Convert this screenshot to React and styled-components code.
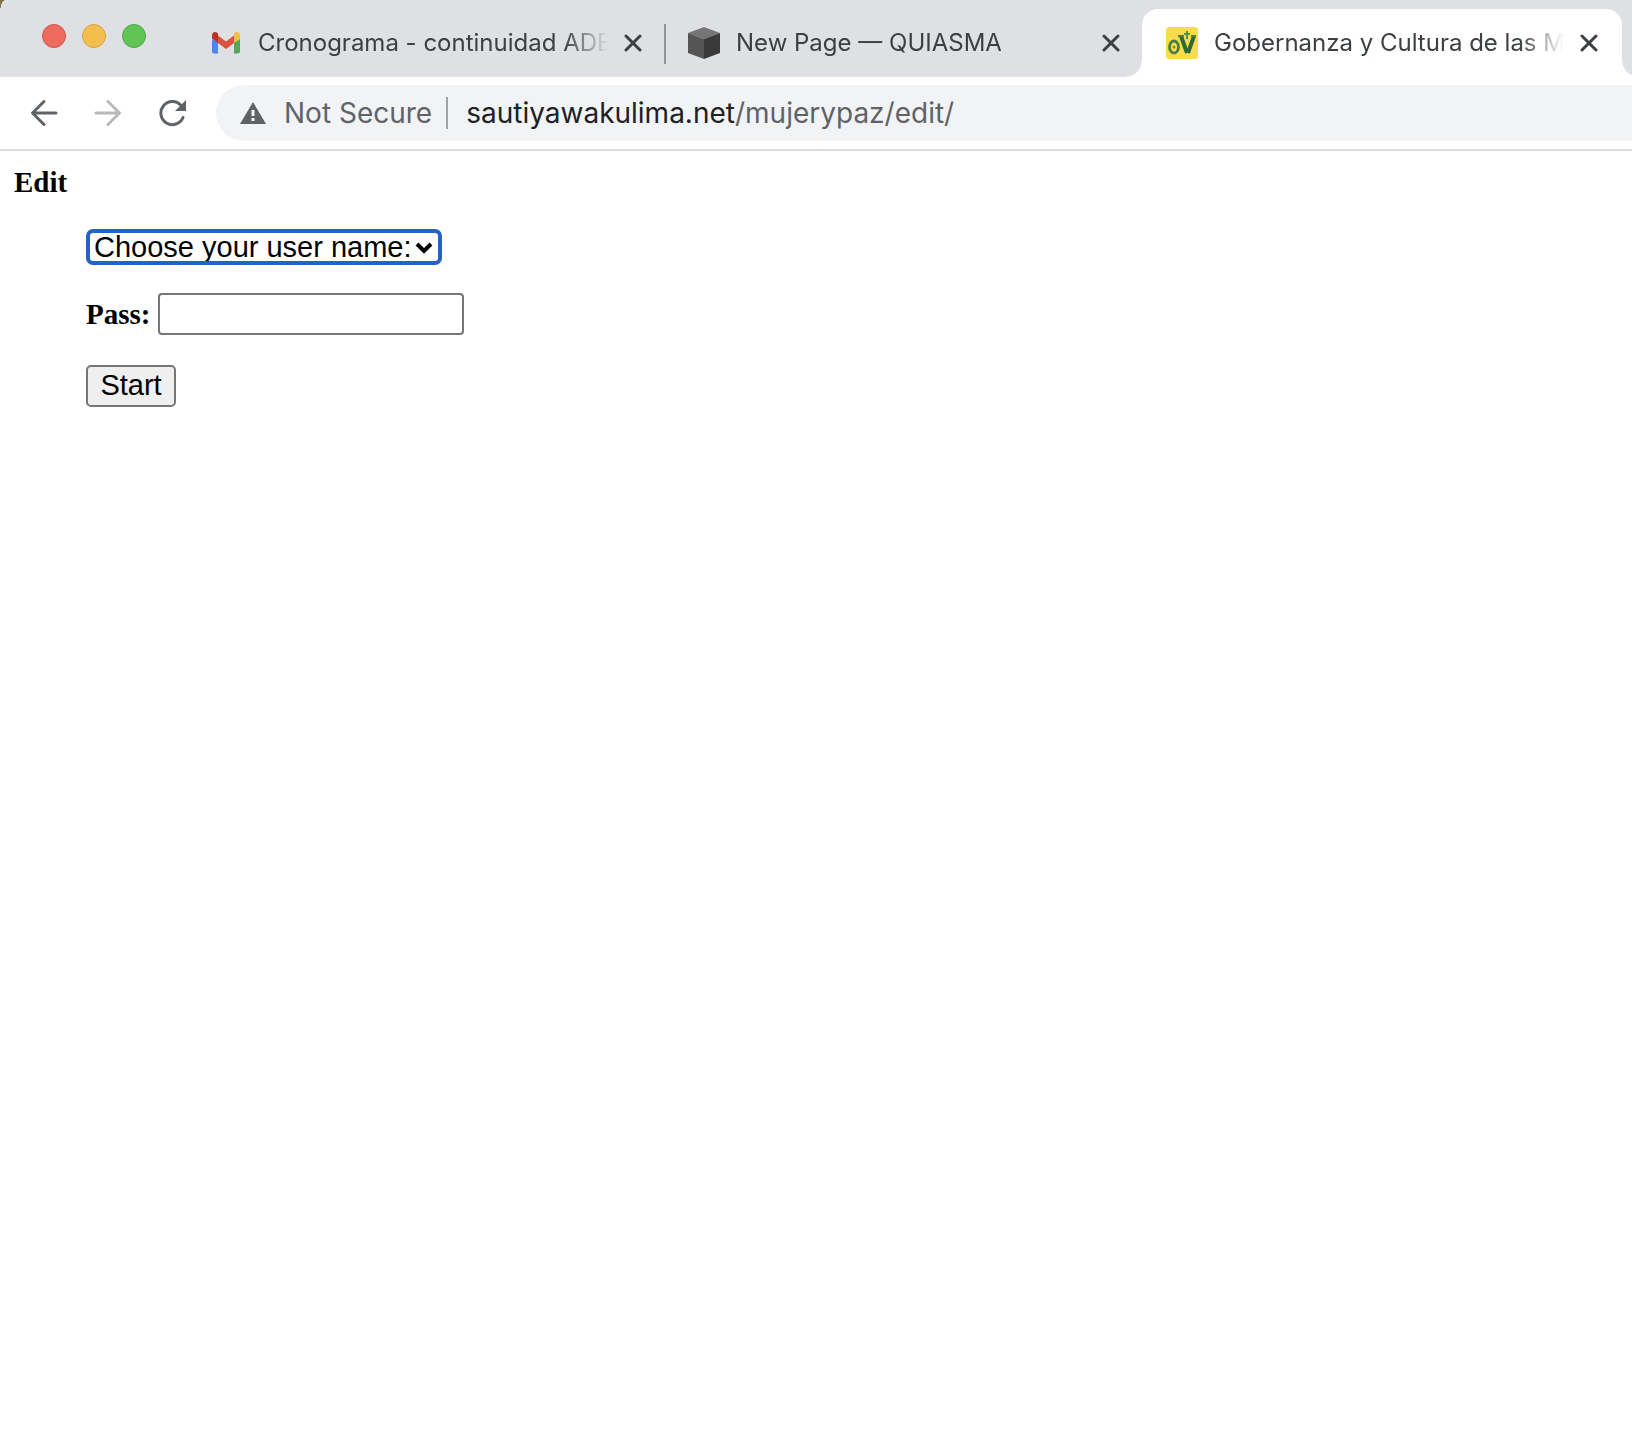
import React from "react";
import styled, { createGlobalStyle, css } from "styled-components";

const uiFont = '"Inter", sans-serif';
const pageFont = '"Liberation Serif", serif';
const controlFont = '"Liberation Sans", sans-serif';

const tabs = [
  { title: "Cronograma - continuidad ADE", icon: GmailIcon, divider: true },
  { title: "New Page — QUIASMA", icon: CubeIcon },
  { title: "Gobernanza y Cultura de las Mu", icon: VozIcon, active: true },
];

function GmailIcon() {
  return (
    <Favicon viewBox="0 0 32 32" aria-hidden="true">
      <path d="M2 12v12.500a2 2 0 0 0 2 2h4V15.500z" fill="#4e86ee" />
      <path d="M30 12v12.500a2 2 0 0 1-2 2h-4V15.500z" fill="#55a65a" />
      <path d="M8 8.500l8 6 8-6v7.500l-8 6-8-6z" fill="#dc5140" />
      <path d="M2 12V8.500C2 5 5 4 7.500 6L8 6.500V16l-6-4.500z" fill="#b93226" />
      <path d="M30 12V8.500C30 5 27 4 24.500 6L24 6.500V16l6-4.500z" fill="#f4bf42" />
    </Favicon>
  );
}

function CubeIcon() {
  return (
    <Favicon viewBox="0 0 32 32" aria-hidden="true">
      <path d="M16 0l16 6-16 6L0 6z" fill="#757575" />
      <path d="M0 6l16 6v20L0 26z" fill="#555" />
      <path d="M32 6l-16 6v20l16-6z" fill="#3a3a3a" />
    </Favicon>
  );
}

function VozIcon() {
  return (
    <Favicon viewBox="0 0 32 32" aria-hidden="true">
      <rect width="32" height="32" rx="3" fill="#fadc4b" />
      <ellipse cx="8" cy="20" rx="4.500" ry="6" fill="none" stroke="#4b7f3f" strokeWidth="2.800" />
      <circle cx="8" cy="20" r="1.500" fill="#6b953f" />
      <path d="M15 9l6 17M28 9l-6 17" fill="none" stroke="#2d6a38" strokeWidth="4" />
      <path d="M12 9h6M25 9h5" stroke="#4b8040" strokeWidth="2" />
      <path d="M21 4v8M18 7h6" stroke="#5d8f40" strokeWidth="2" />
    </Favicon>
  );
}

function CloseIcon() {
  return (
    <svg width="18" height="18" viewBox="0 0 18 18" aria-hidden="true">
      <path d="M2 2l14 14M16 2L2 16" stroke="#3c4043" strokeWidth="3" strokeLinecap="round" />
    </svg>
  );
}

function ArrowIcon() {
  return (
    <svg width="28" height="28" viewBox="0 0 28 28" fill="none" aria-hidden="true">
      <path
        d="M26 14H3M14 2.500L2.500 14 14 25.500"
        stroke="currentColor"
        strokeWidth="3"
        strokeLinecap="round"
        strokeLinejoin="round"
      />
    </svg>
  );
}

function ReloadIcon() {
  return (
    <svg width="28" height="28" viewBox="0 0 28 28" aria-hidden="true">
      <path
        d="M25 18.500A11.500 11.500 0 1 1 23 6.500"
        fill="none"
        stroke="currentColor"
        strokeWidth="3"
        strokeLinecap="round"
      />
      <path d="M28 1v11H17z" fill="currentColor" />
    </svg>
  );
}

function WarningIcon() {
  return (
    <svg width="26" height="22" viewBox="0 0 26 22" aria-hidden="true">
      <path d="M13 0l13 22H0z" fill="#5f6368" />
      <path d="M13 8v6M13 16v3" stroke="#f1f3f4" strokeWidth="3" />
    </svg>
  );
}

function TabStrip() {
  return (
    <Strip>
      <Lights>
        <Light $color="#ed6a5e" $edge="#d9544a" aria-label="Close window" />
        <Light $color="#f4be4f" $edge="#d9a340" aria-label="Minimize window" />
        <Light $color="#61c454" $edge="#4fa943" aria-label="Zoom window" />
      </Lights>
      {tabs.map(({ title, icon: Icon, active, divider }) => (
        <Tab key={title} $active={active} $divider={divider}>
          <Icon />
          <TabTitle>{title}</TabTitle>
          <IconButton aria-label="Close tab">
            <CloseIcon />
          </IconButton>
        </Tab>
      ))}
      <NextTab />
    </Strip>
  );
}

function Toolbar() {
  return (
    <Bar>
      <IconButton aria-label="Back">
        <ArrowIcon />
      </IconButton>
      <IconButton aria-label="Forward" $flip disabled>
        <ArrowIcon />
      </IconButton>
      <IconButton aria-label="Reload">
        <ReloadIcon />
      </IconButton>
      <Omnibox>
        <WarningIcon />
        <Security>Not Secure</Security>
        <Url>
          <strong>sautiyawakulima.net</strong>/mujerypaz/edit/
        </Url>
      </Omnibox>
    </Bar>
  );
}

function LoginForm() {
  return (
    <Page>
      <Heading>Edit</Heading>
      <Form onSubmit={(e) => e.preventDefault()}>
        <SelectBox>
          <Select aria-label="User name" defaultValue="">
            <option value="">Choose your user name:</option>
          </Select>
          <Chevron viewBox="0 0 18 12" aria-hidden="true">
            <path d="M2 2l7 7 7-7" fill="none" stroke="#000" strokeWidth="4" />
          </Chevron>
        </SelectBox>
        <Field>
          <Label htmlFor="pass">Pass:</Label>
          <Input id="pass" type="password" />
        </Field>
        <Start type="submit">Start</Start>
      </Form>
    </Page>
  );
}

function App() {
  return (
    <>
      <GlobalStyle />
      <TabStrip />
      <Toolbar />
      <LoginForm />
    </>
  );
}

export default App;

const GlobalStyle = createGlobalStyle`
  * {
    box-sizing: border-box;
  }

  body {
    margin: 0;
    background: #fff;
    overflow-x: hidden;
  }
`;

// the first background layer is the desktop behind the rounded window corner
const Strip = styled.header`
  display: flex;
  height: 77px;
  padding-top: 9px;
  overflow: hidden;
  background:
    radial-gradient(5px 13px at 100% 100%, #dee0e4 96%, #837050) 0 0 / 5px 13px no-repeat,
    #dee0e4;
  font-family: ${uiFont};
`;

const Lights = styled.div`
  display: flex;
  flex: none;
  gap: 16px;
  width: 186px;
  padding: 15px 0 0 42px;
`;

const Light = styled.button`
  width: 24px;
  height: 24px;
  padding: 0;
  border: 1px solid ${(p) => p.$edge};
  border-radius: 50%;
  background: ${(p) => p.$color};
`;

const Tab = styled.div`
  position: relative;
  display: flex;
  flex: 0 0 478px;
  align-items: center;
  gap: 16px;
  min-width: 0;
  padding: 0 22px 0 24px;

  ${(p) =>
    p.$divider &&
    css`
      &::after {
        content: "";
        position: absolute;
        right: -2px;
        top: 15px;
        width: 2px;
        height: 40px;
        background: #919397;
      }
    `}

  ${(p) =>
    p.$active &&
    css`
      flex-basis: 480px;
      padding-right: 24px;
      border-radius: 16px 16px 0 0;
      background: #fff;

      &::before {
        content: "";
        position: absolute;
        left: -16px;
        bottom: 0;
        width: 16px;
        height: 16px;
        background: radial-gradient(circle at 0 0, transparent 15px, #fff 16px);
      }
    `}
`;

const NextTab = styled.div`
  flex: 1;
  align-self: flex-end;
  height: 16px;
  background: radial-gradient(circle at 16px 0, transparent 15px, #fff 16px);
`;

const Favicon = styled.svg`
  flex: none;
  width: 32px;
  height: 32px;
`;

const TabTitle = styled.span`
  flex: 1;
  overflow: hidden;
  white-space: nowrap;
  font-size: 24px;
  line-height: 32px;
  color: #3c4043;
  mask-image: linear-gradient(to left, transparent, #000 44px);
`;

const IconButton = styled.button`
  display: flex;
  flex: none;
  padding: 0;
  border: none;
  background: none;
  color: #5f6368;
  transform: ${(p) => (p.$flip ? "scaleX(-1)" : "none")};

  &:disabled {
    color: #bababa;
  }
`;

const Bar = styled.nav`
  display: flex;
  align-items: center;
  gap: 36px;
  padding: 8px 0 8px 30px;
  border-bottom: 2px solid #dadbdf;
  background: #fff;
`;

const Omnibox = styled.div`
  display: flex;
  flex: 1;
  align-items: center;
  height: 56px;
  margin-left: -6px;
  padding-left: 24px;
  border-radius: 28px 0 0 28px;
  background: #f1f3f4;
  font-family: ${uiFont};
  font-size: 28px;
  line-height: 32px;
  color: #5f6368;
`;

const Security = styled.span`
  margin-left: 18px;
  padding-right: 14px;
  border-right: 2px solid #a0a2a5;
`;

const Url = styled.span`
  margin-left: 18px;
  white-space: nowrap;

  strong {
    font-weight: 400;
    color: #202124;
  }
`;

const Page = styled.main`
  padding: 14px;
  font-family: ${pageFont};
  font-size: 29px;
  line-height: 34px;
`;

const Heading = styled.h1`
  margin: 0;
  font-size: 29px;
  line-height: 34px;
`;

const Form = styled.form`
  display: flex;
  flex-direction: column;
  align-items: flex-start;
  padding: 30px 72px;
`;

const SelectBox = styled.div`
  position: relative;
`;

const Select = styled.select`
  display: block;
  width: 356px;
  height: 36px;
  padding: 0 4px;
  appearance: none;
  border: 4px solid #2362c9;
  border-radius: 7px;
  outline: none;
  background: #fff;
  color: #000;
  font-family: ${controlFont};
  font-size: 29px;
  line-height: 28px;
`;

const Chevron = styled.svg`
  position: absolute;
  right: 9px;
  top: 13px;
  width: 18px;
  height: 12px;
  pointer-events: none;
`;

const Field = styled.div`
  display: flex;
  align-items: center;
  gap: 8px;
  margin: 28px 0 30px;
`;

const Label = styled.label`
  font-weight: bold;
`;

const Input = styled.input`
  width: 306px;
  height: 42px;
  padding: 2px 4px;
  border: 2px solid #767676;
  border-radius: 4px;
  background: #fff;
  font-family: ${controlFont};
  font-size: 29px;
`;

const Start = styled.button`
  width: 90px;
  height: 42px;
  padding: 0 0 2px;
  border: 2px solid #767676;
  border-radius: 5px;
  background: #efefef;
  color: #000;
  font-family: ${controlFont};
  font-size: 29px;
  line-height: 34px;
`;
